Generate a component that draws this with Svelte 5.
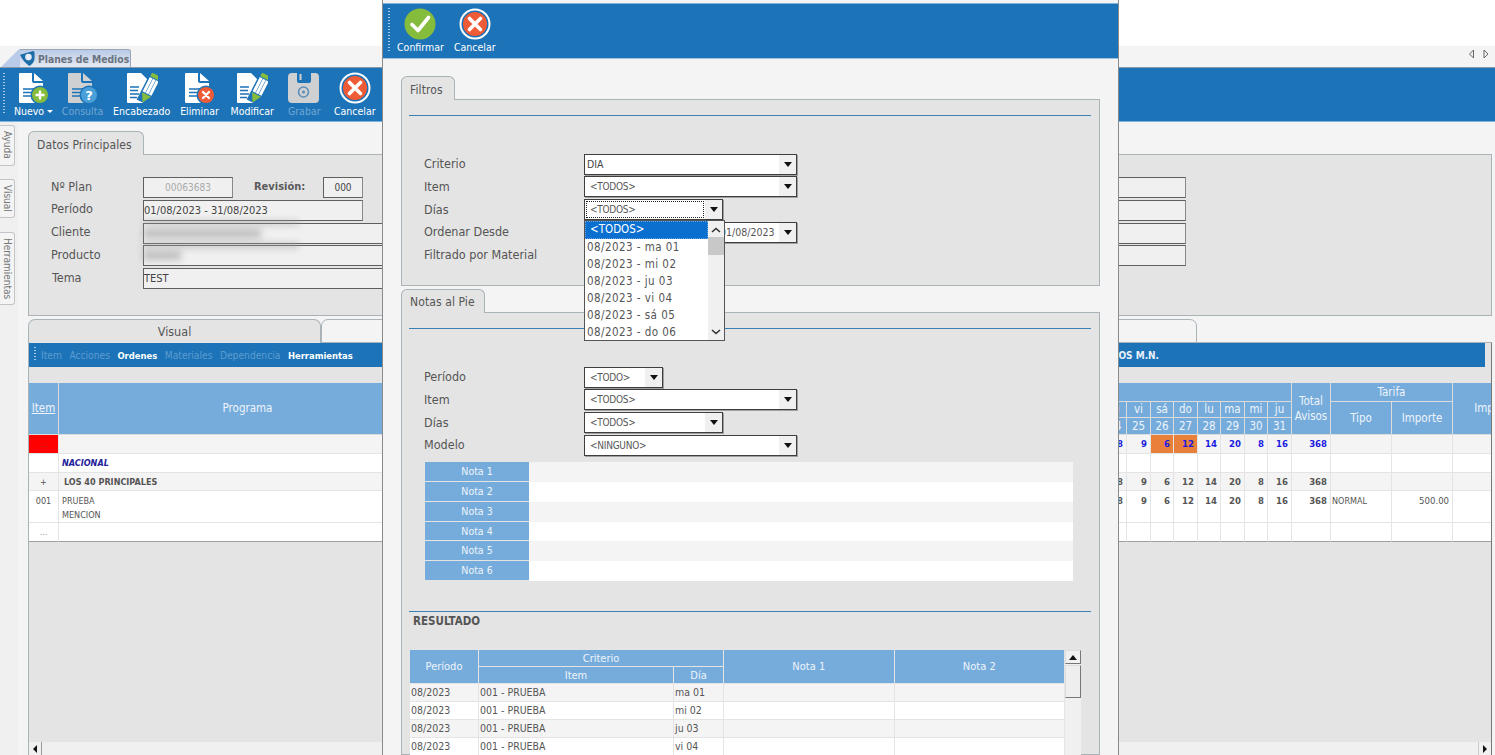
<script>
  const tools = [
    { icon: 'new', label: 'Nuevo', caret: true, w: 47 },
    { icon: 'query', label: 'Consulta', off: true, w: 51 },
    { icon: 'pencil', label: 'Encabezado', w: 67.5 },
    { icon: 'delete', label: 'Eliminar', w: 48 },
    { icon: 'pencil', label: 'Modificar', w: 57.5 },
    { icon: 'save', label: 'Grabar', off: true, w: 46.5 },
    { icon: 'cancel', label: 'Cancelar', w: 54.5 }
  ];
  const menu = [
    ['Item', true], ['Acciones', true], ['Ordenes', false], ['Materiales', true], ['Dependencia', true], ['Herramientas', false]
  ];
  const dayNames = ['ju', 'vi', 'sá', 'do', 'lu', 'ma', 'mi', 'ju'];
  const dayNums = [24, 25, 26, 27, 28, 29, 30, 31];
  const dayVals = [8, 9, 6, 12, 14, 20, 8, 16];
  const dayWidths = [23, 24, 23, 24, 23, 24, 23, 24];
  const dropdown = ['08/2023 - ma 01', '08/2023 - mi 02', '08/2023 - ju 03', '08/2023 - vi 04', '08/2023 - sá 05', '08/2023 - do 06'];
  const notas = [1, 2, 3, 4, 5, 6];
  const results = ['ma 01', 'mi 02', 'ju 03', 'vi 04'];
</script>

{#snippet page(color)}
  <path d="M2 1H14V9a2 2 0 0 0 2 2H25V29a2 2 0 0 1-2 2H2a1.500 1.500 0 0 1-1-1V2a1 1 0 0 1 1-1Z" fill={color} />
  <path d="M16 1L25 9H16Z" fill={color} />
  <path d="M5 17H17M5 20.500H15M5 24H17" stroke="#1c73b8" stroke-width="1.500" />
{/snippet}

{#snippet badge(fill)}
  <circle cx="22" cy="23" r="9.500" fill="#1c73b8" />
  <circle cx="22" cy="23" r="8" fill={fill} />
{/snippet}

{#snippet cancelIcon()}
  <svg class="ico" viewBox="0 0 32 32">
    <circle cx="16" cy="16" r="15.500" fill="#fff" />
    <circle cx="16" cy="16" r="13.500" fill="#1c73b8" />
    <circle cx="16" cy="16" r="12" fill="#ee5b36" />
    <path d="M10.500 10.500L21.500 21.500M21.500 10.500L10.500 21.500" stroke="#fff" stroke-width="3.600" stroke-linecap="round" />
  </svg>
{/snippet}

{#snippet icon(kind)}
  {#if kind === 'cancel'}
    {@render cancelIcon()}
  {:else}
    <svg class="ico" viewBox="0 0 32 32">
      {#if kind === 'new'}
        {@render page('#fff')}
        {@render badge('#86bc3c')}
        <path d="M22 18.500V27.500M17.500 23H26.500" stroke="#fff" stroke-width="2.400" />
      {:else if kind === 'query'}
        {@render page('#cfd0d2')}
        {@render badge('#4a9fd8')}
        <text x="22" y="27.500" class="q">?</text>
      {:else if kind === 'delete'}
        {@render page('#fff')}
        {@render badge('#ee5b36')}
        <path d="M19 20L25 26M25 20L19 26" stroke="#fff" stroke-width="2.300" stroke-linecap="round" />
      {:else if kind === 'pencil'}
        <path d="M2 1H15L21 7V29a2 2 0 0 1-2 2H2a1 1 0 0 1-1-1V2a1 1 0 0 1 1-1Z" fill="#fff" />
        <path d="M4 15H13M4 18.500H12M4 22H13M4 25.500H11" stroke="#1c73b8" stroke-width="1.500" />
        <g transform="translate(16.500 30.500) rotate(27)">
          <rect x="-6.500" y="-32" width="13" height="32" fill="#1c73b8" />
          <path d="M0 0L-5 -9H5Z" fill="#86bc3c" />
          <path d="M-5 -10V-26H-2V-10ZM-1.500 -10V-26H1.500V-10ZM2 -10V-26H5V-10Z" fill="#fff" />
          <rect x="-5" y="-31" width="10" height="4" rx="1" fill="#86bc3c" />
        </g>
      {:else if kind === 'save'}
        <path d="M4 1H9V9a2 2 0 0 0 2 2H21a2 2 0 0 0 2-2V1H27a4 4 0 0 1 4 4V27a4 4 0 0 1-4 4H4a4 4 0 0 1-4-4V5a4 4 0 0 1 4-4Z" fill="#cfd0d2" />
        <path d="M12.500 2V8" stroke="#cfd0d2" stroke-width="2" />
        <circle cx="15.500" cy="20" r="5" fill="none" stroke="#5d8fb8" stroke-width="1.600" />
        <circle cx="15.500" cy="20" r="1.600" fill="#5d8fb8" />
      {/if}
    </svg>
  {/if}
{/snippet}

{#snippet select(text, cls)}
  <div class="select {cls}"><span class="select-text">{text}</span><span class="select-btn"><i class="tri"></i></span></div>
{/snippet}

<div class="screen">
  <div class="top-white"></div>

  <div class="tabstrip">
    <div class="app-tab">
      <svg class="slope" viewBox="0 0 20 20" preserveAspectRatio="none"><path d="M0 20L18 1Q19 0 20 0V20Z" fill="#b9cbe9" /></svg>
      <div class="app-tab-body">
        <svg class="shield" viewBox="0 0 16 16"><path d="M0 4L14 0Q15.500 0 15.500 2V8Q15 13 10 16Q3 11 0 4Z" fill="#1c6da8" /><circle cx="9" cy="6.500" r="3.500" fill="#e8eef6" /></svg>
        <span>Planes de Medios</span>
      </div>
    </div>
    <div class="nav">
      <svg viewBox="0 0 24 10"><path d="M5.500 1L1.500 5L5.500 9ZM16 1L20 5L16 9Z" fill="#f4f4f4" stroke="#666" /></svg>
    </div>
  </div>

  <div class="toolbar">
    <div class="grip"></div>
    {#each tools as t}
      <div class="tool" class:off={t.off} style="width:{t.w}px">
        {@render icon(t.icon)}
        <span class="tool-label">{t.label}{#if t.caret}<i class="caret"></i>{/if}</span>
      </div>
    {/each}
  </div>

  <div class="body">
    <div class="side">
      <div class="vtab ayuda">Ayuda</div>
      <div class="vtab visual">Visual</div>
      <div class="vtab herr">Herramientas</div>
    </div>

    <div class="main">
      <div class="tab datos">Datos Principales</div>
      <div class="panel datos-panel">
        <div class="fields">
          <div class="row-a">
            <span class="lab">Nº Plan</span>
            <div class="inp plan">00063683</div>
            <span class="lab rev">Revisión:</span>
            <div class="inp revn">000</div>
            <div class="inp far"></div>
          </div>
          <div class="row-a">
            <span class="lab">Período</span>
            <div class="inp periodo">01/08/2023 - 31/08/2023</div>
            <div class="inp far"></div>
          </div>
          <div class="row-a">
            <span class="lab">Cliente</span>
            <div class="inp wide"></div>
          </div>
          <div class="row-a">
            <span class="lab">Producto</span>
            <div class="inp wide"></div>
          </div>
          <div class="row-a">
            <span class="lab tema">Tema</span>
            <div class="inp tema-inp">TEST</div>
          </div>
          <div class="smudge s1"></div>
          <div class="smudge s2"></div>
          <div class="smudge s3"></div>
          <div class="smudge s4"></div>
        </div>
      </div>

      <div class="tabs2">
        <div class="t2 t-visual">Visual</div>
        <div class="t2 t-other"></div>
      </div>
      <div class="panel grid-panel">
        <div class="menubar">
          <div class="grip small"></div>
          {#each menu as m}
            <span class="menu-item" class:dim={m[1]}>{m[0]}</span>
          {/each}
          <span class="menu-note">VALORES EN PESOS M.N.</span>
        </div>
        <div class="graybar"></div>
        <table class="plan-table">
          <colgroup>
            <col class="c-item" /><col class="c-prog" /><col class="c-rest" />
            {#each dayWidths as w}<col style="width:{w}px" />{/each}
            <col class="c-total" /><col class="c-tar" /><col class="c-tar" /><col class="c-imp" />
          </colgroup>
          <thead>
            <tr class="h1">
              <th rowspan="3"><u>Item</u></th>
              <th rowspan="3">Programa</th>
              <th rowspan="3"></th>
              <th colspan="8"></th>
              <th rowspan="3">Total Avisos</th>
              <th colspan="2">Tarifa</th>
              <th rowspan="3">Importe</th>
            </tr>
            <tr class="h2">
              {#each dayNames as d}<th>{d}</th>{/each}
              <th rowspan="2">Tipo</th>
              <th rowspan="2">Importe</th>
            </tr>
            <tr class="h3">
              {#each dayNums as d}<th>{d}</th>{/each}
            </tr>
          </thead>
          <tbody>
            <tr class="r19 odd">
              <td class="red">...</td><td></td><td></td>
              {#each dayVals as v, i}<td class="num blue" class:orange={i === 2 || i === 3}>{v}</td>{/each}
              <td class="num blue">368</td><td></td><td></td><td></td>
            </tr>
            <tr class="r19">
              <td></td><td class="nacional">NACIONAL</td><td></td>
              {#each dayVals as v}<td></td>{/each}
              <td></td><td></td><td></td><td></td>
            </tr>
            <tr class="r18 odd">
              <td class="ctr">+</td><td class="bold-t">LOS 40 PRINCIPALES</td><td></td>
              {#each dayVals as v}<td class="num">{v}</td>{/each}
              <td class="num">368</td><td></td><td></td><td></td>
            </tr>
            <tr class="r32">
              <td class="ctr top">001</td><td class="prog top">PRUEBA<br />MENCION</td><td></td>
              {#each dayVals as v}<td class="num top">{v}</td>{/each}
              <td class="num top">368</td><td class="top small">NORMAL</td><td class="top amount">500.00</td><td></td>
            </tr>
            <tr class="r19">
              <td class="ctr dots">...</td><td></td><td></td>
              {#each dayVals as v}<td></td>{/each}
              <td></td><td></td><td></td><td></td>
            </tr>
          </tbody>
        </table>
        <div class="hscroll">
          <span class="hbtn"><i class="tri-left"></i></span>
          <span class="hbtn right"><i class="tri-right"></i></span>
        </div>
      </div>
    </div>
  </div>

  <!-- modal dialog over the page -->
  <div class="modal">
    <div class="m-toolbar">
      <div class="grip m-grip"></div>
      <div class="m-tool confirm">
        <svg class="ico" viewBox="0 0 32 32">
          <circle cx="16" cy="16" r="15.500" fill="#86bc3c" />
          <path d="M8 16.500L14 22.500L24.500 9.500" fill="none" stroke="#fff" stroke-width="3.600" stroke-linecap="round" stroke-linejoin="round" />
        </svg>
        <span class="tool-label">Confirmar</span>
      </div>
      <div class="m-tool">
        {@render cancelIcon()}
        <span class="tool-label">Cancelar</span>
      </div>
    </div>

    <div class="m-body">
      <div class="tab filtros">Filtros</div>
      <div class="panel filtros-panel">
        <div class="rule"></div>
        <div class="form f1">
          <span class="lab">Criterio</span>
          {@render select('DIA', 'full big')}
          <span class="lab">Item</span>
          {@render select('<TODOS>', 'full pad')}
          <span class="lab">Días</span>
          <div class="select mid focus"><span class="select-text focus-box">&lt;TODOS&gt;</span><span class="select-btn"><i class="tri"></i></span></div>
          <span class="lab">Ordenar Desde</span>
          {@render select('01/08/2023', 'full date')}
          <span class="lab">Filtrado por Material</span>
          <span></span>
        </div>
        <div class="dropdown">
          <div class="dd-list">
            <div class="dd-sel">&lt;TODOS&gt;</div>
            {#each dropdown as d}<div class="dd-item">{d}</div>{/each}
          </div>
          <div class="dd-scroll">
            <svg class="chev" viewBox="0 0 10 6"><path d="M1 5L5 1.500L9 5" fill="none" stroke="#333" stroke-width="1.600" /></svg>
            <div class="dd-thumb"></div>
            <svg class="chev down" viewBox="0 0 10 6"><path d="M1 1L5 4.500L9 1" fill="none" stroke="#333" stroke-width="1.600" /></svg>
          </div>
        </div>
      </div>

      <div class="tab notas-tab">Notas al Pie</div>
      <div class="panel notas-panel">
        <div class="rule"></div>
        <div class="form f2">
          <span class="lab">Período</span>
          {@render select('<TODO>', 'short')}
          <span class="lab">Item</span>
          {@render select('<TODOS>', 'full pad')}
          <span class="lab">Días</span>
          {@render select('<TODOS>', 'mid pad')}
          <span class="lab">Modelo</span>
          {@render select('<NINGUNO>', 'full pad')}
        </div>
        <div class="notes">
          {#each notas as n}
            <div class="note-row">
              <div class="note-lab">Nota {n}</div>
              <div class="note-val"></div>
            </div>
          {/each}
        </div>
        <div class="rule res-rule"></div>
        <div class="res-title">RESULTADO</div>
        <div class="res-wrap">
          <table class="res-table">
            <colgroup>
              <col class="rc1" /><col class="rc2" /><col class="rc3" /><col class="rc4" /><col class="rc4" />
            </colgroup>
            <thead>
              <tr>
                <th rowspan="2">Período</th>
                <th colspan="2">Criterio</th>
                <th rowspan="2">Nota 1</th>
                <th rowspan="2">Nota 2</th>
              </tr>
              <tr><th>Item</th><th>Día</th></tr>
            </thead>
            <tbody>
              {#each results as r, i}
                <tr class:odd={i % 2 === 0}>
                  <td>08/2023</td><td>001 - PRUEBA</td><td>{r}</td><td></td><td></td>
                </tr>
              {/each}
            </tbody>
          </table>
          <div class="vscroll">
            <div class="vbtn"><i class="tri-up"></i></div>
            <div class="vthumb"></div>
          </div>
        </div>
      </div>
    </div>
  </div>
</div>

<style>
  :global(body) { margin: 0; background: #fff; }
  * { box-sizing: border-box; }

  .screen {
    position: relative;
    width: 1495px;
    height: 755px;
    overflow: hidden;
    background: #fff;
    display: flex;
    flex-direction: column;
    font-family: "DejaVu Sans Condensed", "DejaVu Sans", sans-serif;
    font-size: 12px;
    color: #555;
  }
  .top-white { height: 46px; flex: none; }

  .tabstrip {
    height: 21px;
    flex: none;
    background: #f4f4f4;
    display: flex;
    align-items: flex-end;
    justify-content: space-between;
    padding-left: 1px;
  }
  .app-tab { display: flex; height: 18px; }
  .slope { width: 19px; height: 18px; display: block; }
  .app-tab-body {
    width: 111px;
    display: flex;
    align-items: center;
    gap: 3px;
    background: linear-gradient(#b9cbe9, #e6e9f0);
    border: 1px solid #9aa6b4;
    border-left: 0;
    border-bottom: 0;
    border-radius: 0 3px 0 0;
    font-size: 10.300px;
    font-weight: bold;
    color: #6b7480;
    white-space: nowrap;
  }
  .shield { width: 15px; height: 15px; flex: none; }
  .nav { margin: 0 3px 8px 0; }
  .nav svg { width: 24px; height: 10px; display: block; }

  .toolbar {
    height: 55px;
    flex: none;
    background: #1c73b8;
    border-top: 1px solid #8a98ac;
    border-bottom: 1px solid #7fb2dc;
    display: flex;
    padding-left: 10px;
    padding-top: 4px;
    position: relative;
  }
  .grip {
    position: absolute;
    left: 3px;
    top: 5px;
    width: 2px;
    height: 42px;
    background: repeating-linear-gradient(#a9cbe8 0 1px, transparent 1px 3px);
  }
  .tool {
    display: flex;
    flex-direction: column;
    align-items: center;
    color: #fff;
    flex: none;
  }
  .ico { width: 32px; height: 32px; display: block; flex: none; }
  .q { font: bold 13px "DejaVu Sans", sans-serif; fill: #fff; text-anchor: middle; }
  .tool-label {
    font-size: 10.500px;
    line-height: 13px;
    margin-top: 1px;
    white-space: nowrap;
    color: #fff;
    display: inline-flex;
    align-items: center;
  }
  .off .tool-label { color: #72a6d2; }
  .caret {
    width: 0; height: 0;
    margin-left: 3px;
    border: 3px solid transparent;
    border-top-color: #fff;
    border-bottom: 0;
  }

  .body { flex: 1; display: flex; min-height: 0; }
  .side {
    width: 18px;
    flex: none;
    background: #f0f0f0;
    display: flex;
    flex-direction: column;
    padding-top: 3px;
  }
  .vtab {
    writing-mode: vertical-rl;
    width: 15px;
    border: 1px solid #c4c4c4;
    border-left: 0;
    border-radius: 0 3px 3px 0;
    font-size: 10px;
    color: #777;
    display: flex;
    align-items: center;
    padding-top: 5px;
    background: #f4f4f4;
  }
  .ayuda { height: 41px; }
  .visual { height: 39px; margin-top: 13px; }
  .herr { height: 73px; margin-top: 14px; }

  .main { flex: 1; min-width: 0; background: #f4f4f4; padding: 9px 3px 0 10px; display: flex; flex-direction: column; }

  .tab {
    height: 24px;
    background: #e4e4e4;
    border: 1px solid #a9b3b8;
    border-bottom: 0;
    border-radius: 6px 6px 0 0;
    color: #555;
    padding: 5px 8px 0;
    line-height: 15px;
    letter-spacing: .1px;
    white-space: nowrap;
    position: relative;
    z-index: 1;
    margin-bottom: -1px;
  }
  .datos { width: 116px; padding-top: 6px; }
  .panel { background: #e4e4e4; border: 1px solid #a9b3b8; position: relative; }
  .datos-panel { height: 162px; flex: none; padding: 22px 0 0 22px; }

  .fields { position: relative; display: flex; flex-direction: column; gap: 1.800px; }
  .row-a { display: flex; align-items: center; height: 21px; }
  .row-a .lab { width: 92px; flex: none; margin-top: -2px; }
  .lab { color: #555; line-height: 20px; white-space: nowrap; font-size: 12.500px; }
  .row-a .tema { padding-left: 1px; }
  .row-a .rev { font-weight: bold; font-size: 11px; margin-left: 21px; width: 69px; color: #5a5a5a; }
  .inp {
    height: 21px;
    background: #f0f0f0;
    border: 1px solid #5f5f5f;
    border-right-color: #888;
    font-size: 11px;
    line-height: 19px;
    white-space: nowrap;
    padding-left: 0;
    color: #444;
    flex: none;
  }
  .plan { width: 90px; text-align: center; color: #aaa; font-size: 10px; }
  .revn { width: 40px; text-align: center; color: #444; font-size: 10px; }
  .periodo { width: 220px; }
  .wide { width: 1043px; }
  .tema-inp { width: 900px; }
  .far { margin-left: auto; width: 400px; margin-right: 305px; }
  .smudge { position: absolute; background: #9f9f9f; filter: blur(3.500px); opacity: .62; }
  .s1 { left: 92px; top: 44px; width: 156px; height: 4px; }
  .s2 { left: 92px; top: 52px; width: 118px; height: 9px; }
  .s3 { left: 92px; top: 66px; width: 156px; height: 5px; }
  .s4 { left: 92px; top: 74px; width: 38px; height: 9px; }

  .tabs2 { display: flex; height: 24px; margin-top: 3px; flex: none; position: relative; z-index: 1; margin-bottom: -1px; }
  .t2 {
    border: 1px solid #a9b3b8;
    border-radius: 7px 7px 0 0;
    text-align: center;
    line-height: 24px;
    color: #555;
    font-size: 12.500px;
  }
  .t-visual { width: 293px; background: #e4e4e4; border-bottom: 0; }
  .t-other { width: 876px; background: #f4f4f4; }

  .grid-panel { flex: 1; min-height: 0; display: flex; flex-direction: column; border-bottom: 0; border-right-color: #777; overflow: hidden; }
  .menubar {
    height: 24px;
    width: 1456px;
    flex: none;
    background: #1c73b8;
    display: flex;
    align-items: center;
    position: relative;
    padding-left: 12px;
  }
  .grip.small { left: 5px; top: 4px; height: 15px; }
  .menu-item { color: #fff; font-weight: bold; margin-right: 7.500px; font-size: 9.400px; white-space: nowrap; }
  .menu-item.dim { color: #5c9ccf; font-weight: normal; font-size: 10.200px; }
  .menu-note { margin-left: auto; margin-right: 326px; color: #e8f0f8; font-weight: bold; font-size: 10px; white-space: nowrap; }
  .graybar { height: 16px; flex: none; }

  table { border-collapse: separate; border-spacing: 0; table-layout: fixed; }
  .plan-table { width: 1508px; flex: none; }
  .c-item { width: 30px; }
  .c-prog { width: 378px; }
  .c-rest { width: 667px; }
  .c-total { width: 39px; }
  .c-tar { width: 61px; }
  .c-imp { width: 84px; }
  .plan-table th {
    background: #76acdc;
    color: #eef4fa;
    font-size: 11.500px;
    font-weight: normal;
    border-right: 1px solid #dcdcdc;
    border-bottom: 1px solid #dcdcdc;
    padding: 0;
    overflow: hidden;
    white-space: normal;
    line-height: 15px;
  }
  .h1 { height: 19px; }
  .h2 { height: 16px; }
  .h3 { height: 17px; }
  .plan-table td {
    border-right: 1px solid #e4e4e4;
    border-bottom: 1px solid #e4e4e4;
    padding: 0 3px;
    font-size: 9px;
    color: #555;
    background: #fff;
    white-space: nowrap;
    overflow: hidden;
    line-height: 14px;
  }
  .plan-table .r19:last-child td { border-bottom-color: #a0a0a0; }
  .plan-table .odd td { background: #f4f4f4; }
  .r19 { height: 19px; }
  .r18 { height: 18px; }
  .r32 { height: 32px; }
  .plan-table td.red { background: #f00; color: #a33; text-align: center; line-height: 10px; }
  .plan-table td.num { text-align: right; font-weight: bold; font-size: 9.500px; color: #555; padding-right: 3px; }
  .plan-table td.blue { color: #1a1ae0; }
  .plan-table td.orange { background: #e8803c; }
  .plan-table td.ctr { text-align: center; }
  .plan-table td.top { vertical-align: top; padding-top: 3px; line-height: 14px; }
  .plan-table td.nacional { font-style: italic; font-weight: bold; color: #22229a; }
  .plan-table td.bold-t { font-weight: bold; padding-left: 5px; color: #555; }
  .plan-table td.small { font-size: 9px; padding-left: 1px; }
  .plan-table td.amount { text-align: right; font-size: 9.500px; }
  .plan-table td.dots { color: #999; }
  .hscroll {
    margin-top: auto;
    height: 13px;
    flex: none;
    background: #f0f0f0;
    display: flex;
    justify-content: space-between;
  }
  .hbtn { width: 13px; height: 13px; display: flex; align-items: center; justify-content: center; border-right: 1px solid #999; background: #f0f0f0; }
  .hbtn.right { border-right: 0; border-left: 1px solid #ccc; }
  .tri-left { border: 4px solid transparent; border-right: 4px solid #111; border-left: 0; }
  .tri-right { border: 4px solid transparent; border-left: 4px solid #111; border-right: 0; }

  /* modal */
  .modal {
    position: absolute;
    left: 382px;
    top: 0;
    z-index: 5;
    width: 737px;
    height: 755px;
    background: #f4f4f4;
    border-left: 1px solid #8a8a8a;
    border-right: 1px solid #8a8a8a;
    overflow: hidden;
    display: flex;
    flex-direction: column;
    padding-top: 3px;
  }
  .m-toolbar {
    height: 56px;
    flex: none;
    background: #1c73b8;
    border-top: 1px solid #7fb2dc;
    border-bottom: 1px solid #9ec3e3;
    display: flex;
    position: relative;
    padding-left: 14px;
    padding-top: 4px;
    gap: 10px;
  }
  .m-grip { left: 5px; top: 4px; height: 45px; }
  .m-tool { display: flex; flex-direction: column; align-items: center; }
  .m-tool .tool-label { margin-top: 1px; }
  .m-body { padding: 17px 18px 0 18px; flex: 1; min-height: 0; display: flex; flex-direction: column; }
  .filtros { width: 54px; padding-top: 6px; }
  .filtros-panel { height: 187px; flex: none; padding: 0 8px 0 7px; }
  .rule { height: 1px; background: #3d7fb0; margin-top: 15px; }
  .form {
    display: grid;
    grid-template-columns: 160px 1fr;
    grid-auto-rows: 20px;
    row-gap: 2.750px;
    padding-left: 15px;
    align-items: center;
    justify-items: start;
  }
  .f1 { margin-top: 38px; }
  .f2 { margin-top: 38px; }
  .select {
    height: 21px;
    background: #fff;
    border: 1px solid #3e3e3e;
    box-shadow: 1px 1px 0 #a0a0a0;
    display: flex;
    align-items: center;
    justify-content: space-between;
    font-size: 10px;
    letter-spacing: -.25px;
    color: #555;
    padding-left: 5px;
    overflow: hidden;
    white-space: nowrap;
  }
  .select-btn {
    width: 17px;
    height: 19px;
    background: #f0f0f0;
    display: flex;
    align-items: center;
    justify-content: center;
    flex: none;
  }
  .tri { border: 4px solid transparent; border-top: 5px solid #111; border-bottom: 0; }
  .full { width: 213px; }
  .mid { width: 139px; }
  .short { width: 79px; }
  .big { padding-left: 2px; font-size: 10.500px; color: #444; letter-spacing: 0; }
  .date { padding-left: 135px; font-size: 10.500px; padding-right: 0; letter-spacing: 0; }
  .focus { padding: 1px 0 1px 1px; }
  .focus-box { flex: 1; height: 17px; border: 1px dotted #222; line-height: 15px; padding-left: 3px; margin-right: 1px; }

  .dropdown {
    position: absolute;
    left: 182px;
    top: 120px;
    width: 141px;
    height: 121px;
    background: #fff;
    border: 1px solid #555;
    display: flex;
    overflow: hidden;
    z-index: 3;
  }
  .dd-list { width: 123px; flex: none; font-size: 11.500px; letter-spacing: .45px; }
  .dd-sel { height: 18px; background: #0b6fd0; color: #fff; padding-left: 4px; line-height: 14px; border: 1px dotted #6aa5de; letter-spacing: 0; }
  .dd-item { height: 17px; line-height: 17px; padding-left: 2px; color: #555; white-space: nowrap; }
  .dd-scroll { flex: 1; background: #f0f0f0; display: flex; flex-direction: column; align-items: center; position: relative; }
  .chev { width: 10px; height: 6px; margin-top: 6px; }
  .chev.down { position: absolute; bottom: 5px; margin: 0; }
  .dd-thumb { width: 100%; margin-top: 4px; height: 18px; background: #c8c8c8; }

  .notas-tab { width: 84px; margin-top: 3px; }
  .notas-panel { flex: 1; min-height: 0; padding: 0 8px 0 7px; }
  .notes { margin: 7px 0 0 15px; width: 649px; }
  .note-row { display: flex; height: 19.800px; }
  .note-lab {
    width: 105px;
    background: #76acdc;
    color: #eef4fa;
    font-size: 10.500px;
    text-align: center;
    line-height: 18px;
    border-bottom: 1px solid #e4e4e4;
    border-left: 1px solid #e4e4e4;
  }
  .note-val { flex: 1; background: #fff; }
  .note-row:nth-child(odd) .note-val { background: #f4f4f4; }
  .res-rule { margin-top: 30px; }
  .res-title { font-weight: bold; font-size: 11.500px; color: #555; padding-left: 4px; line-height: 18px; }
  .res-wrap { display: flex; margin-top: 20px; margin-left: 1px; align-items: flex-start; }
  .res-table { width: 655px; flex: none; }
  .rc1 { width: 69px; }
  .rc2 { width: 195px; }
  .rc3 { width: 50px; }
  .rc4 { width: 170.500px; }
  .res-table th {
    background: #76acdc;
    color: #eef4fa;
    font-size: 11px;
    font-weight: normal;
    height: 17px;
    padding: 0;
    border-right: 1px solid #e4e4e4;
    border-bottom: 1px solid #e4e4e4;
  }
  .res-table td {
    height: 18px;
    background: #fff;
    border-right: 1px solid #e4e4e4;
    border-bottom: 1px solid #e4e4e4;
    font-size: 10.500px;
    padding: 0 1px 2px;
    color: #555;
  }
  .res-table .odd td { background: #f4f4f4; }
  .vscroll { width: 16px; align-self: stretch; height: 140px; background: #f0f0f0; }
  .vbtn { height: 14px; border: 1px solid #ddd; border-right-color: #777; border-bottom-color: #777; background: #f0f0f0; display: flex; align-items: center; justify-content: center; }
  .tri-up { border: 4px solid transparent; border-bottom: 5px solid #111; border-top: 0; }
  .vthumb { height: 33px; margin-top: 1px; background: #eee; border: 1px solid #ddd; border-right-color: #777; border-bottom-color: #777; }
</style>
